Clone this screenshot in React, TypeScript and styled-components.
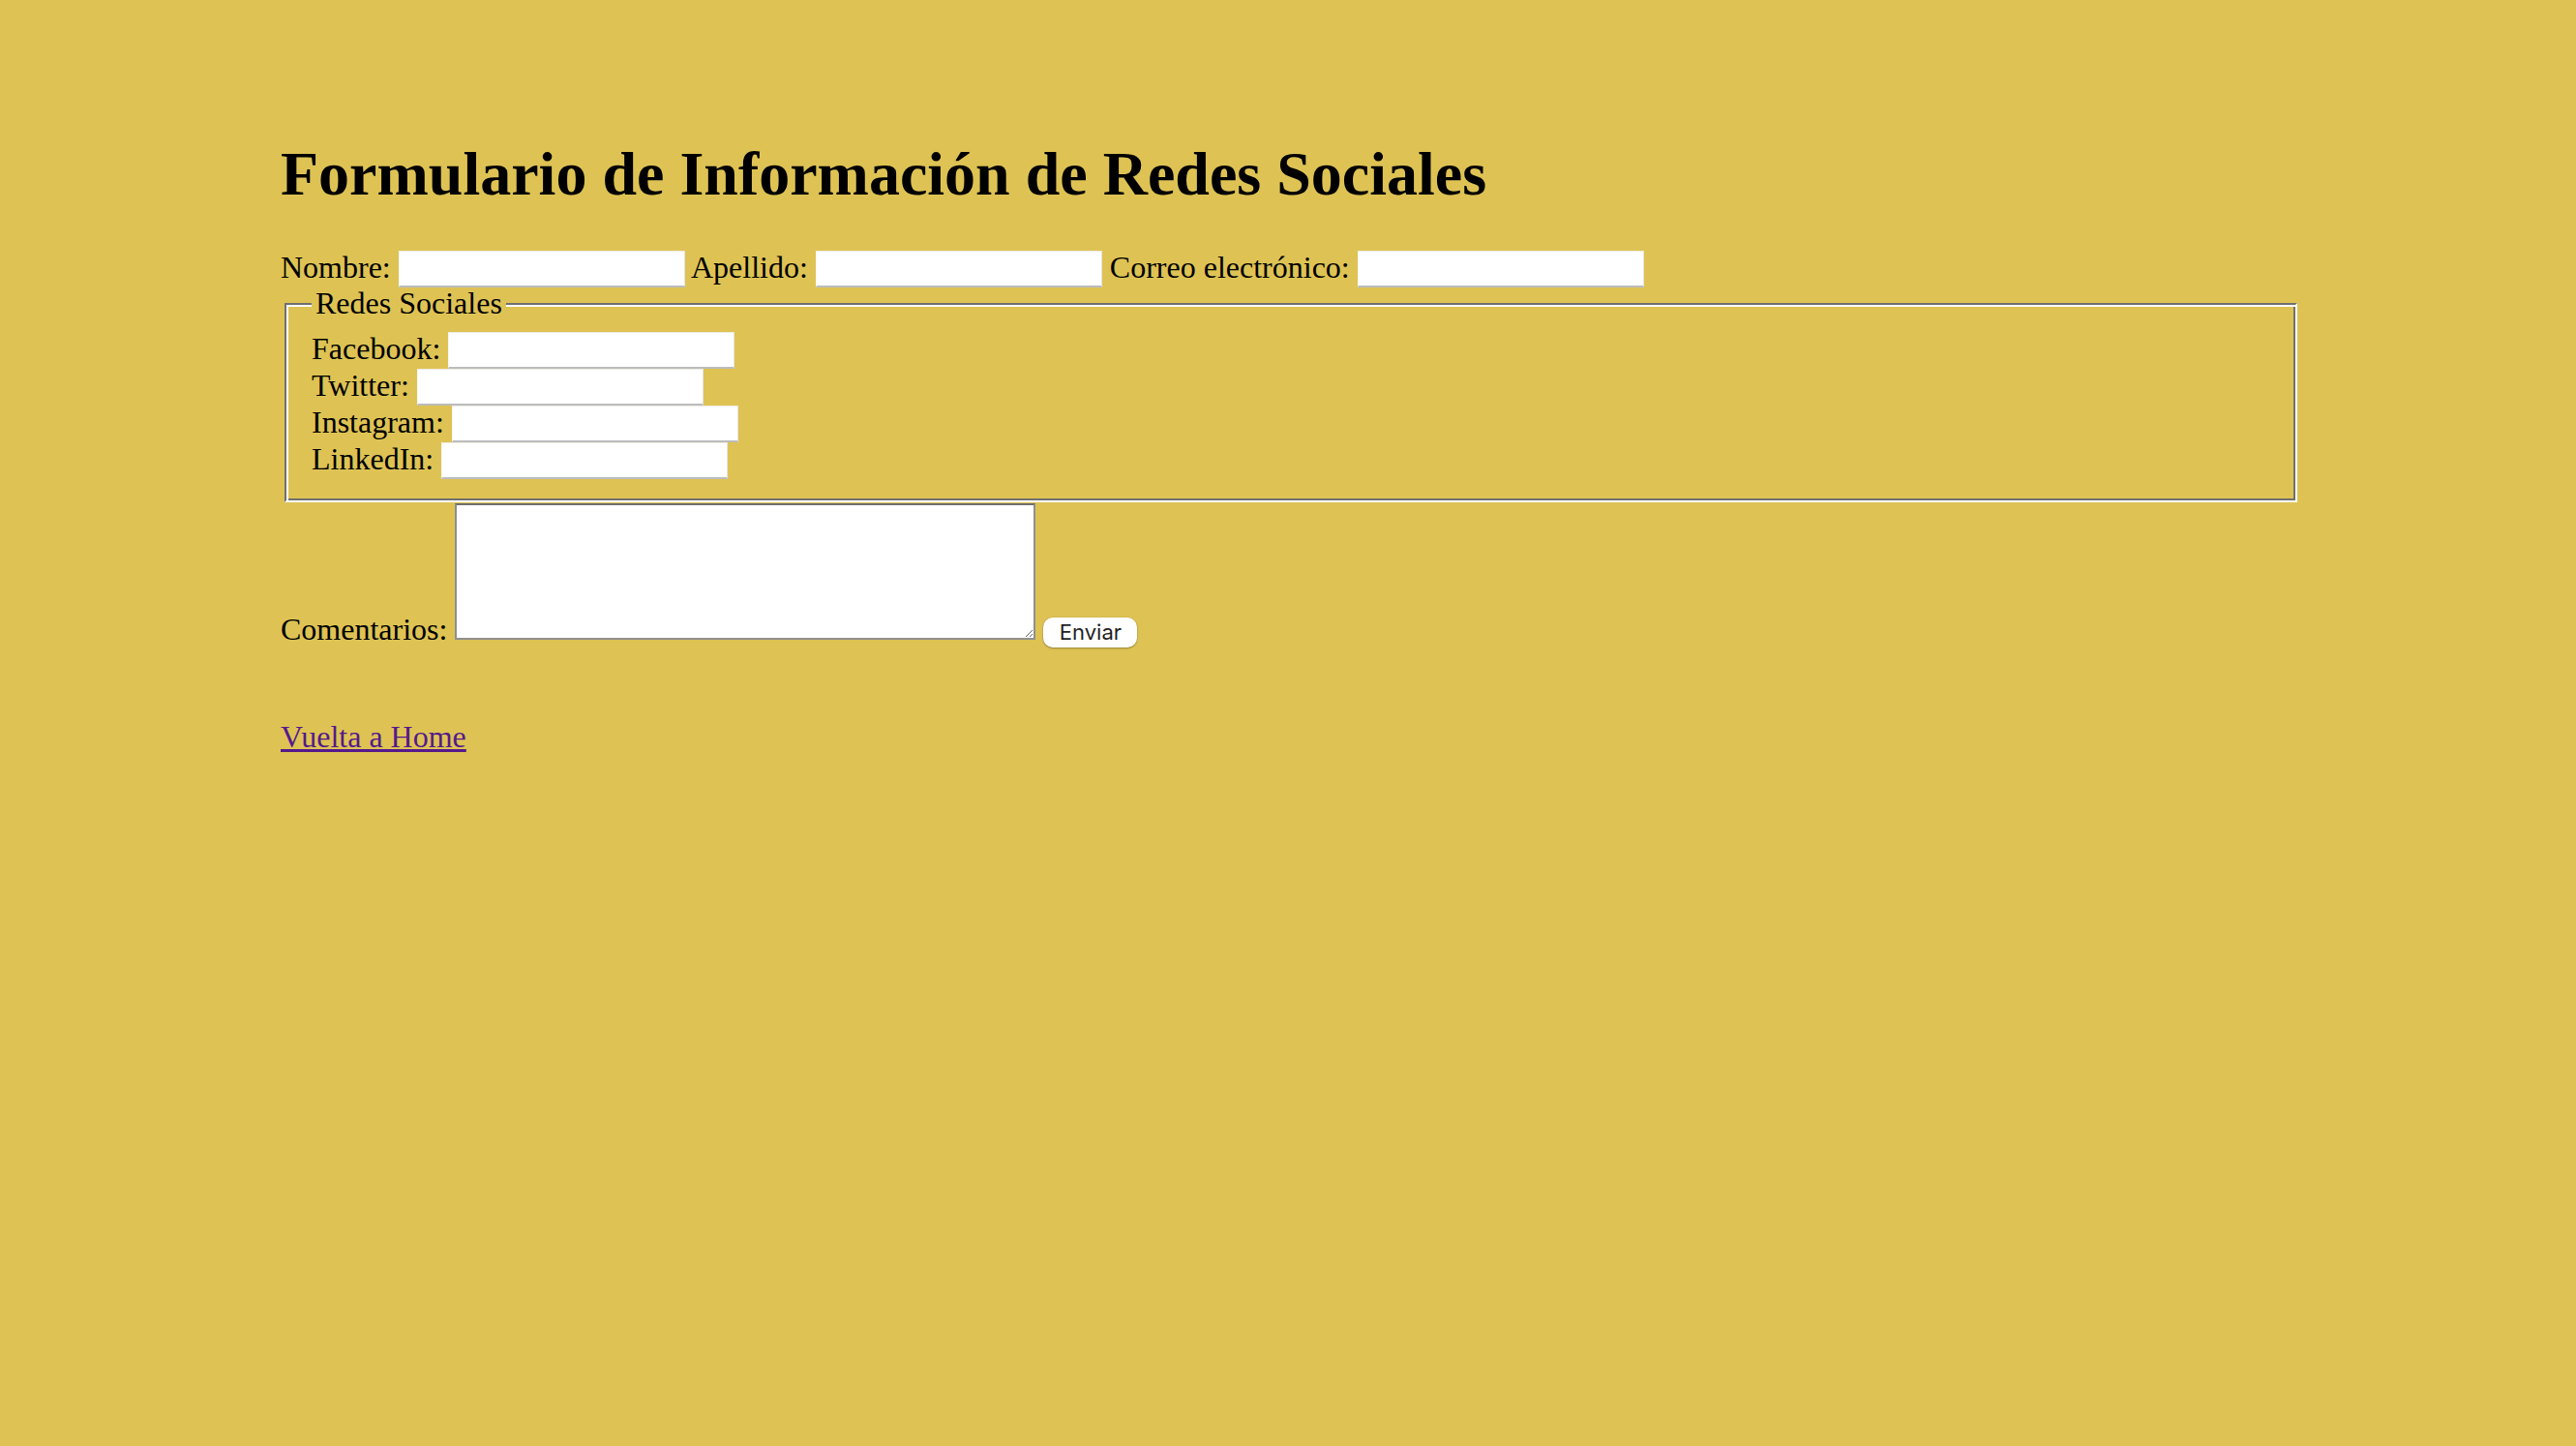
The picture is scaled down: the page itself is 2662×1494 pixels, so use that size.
import React from "react";
import styled, { createGlobalStyle } from "styled-components";

const GlobalStyle = createGlobalStyle`
  html {
    background: #dec354;
  }
  html, body {
    margin: 0;
    padding: 0;
  }
  body {
    font-family: "Liberation Serif", "Times New Roman", serif;
    font-size: 32px;
    color: #000;
  }
`;

const Page = styled.main`
  box-sizing: content-box;
  width: 2088px;
  padding: 100px 0 0 290px;
`;

const Title = styled.h1`
  margin: 43px 0 42px;
  font-size: 64px;
  font-weight: bold;
  line-height: normal;
  white-space: nowrap;
`;

const Form = styled.form`
  margin: 0;
`;

const InputRow = styled.div`
  white-space: nowrap;
  line-height: 35px;
`;

const CommentRow = styled.div`
  white-space: nowrap;
  line-height: normal;
`;

const Field = styled.label`
  font: inherit;
`;

const TextInput = styled.input`
  box-sizing: border-box;
  width: 296px;
  height: 38px;
  margin: 0;
  padding: 0 4px;
  font-family: "Inter", sans-serif;
  font-size: 22px;
  background: #fff;
  border-style: solid;
  border-width: 1px 1px 2px 1px;
  border-color: rgba(120, 100, 20, 0.12) #e4e4e4 #bcbcbc rgba(120, 100, 20, 0.06);
  border-radius: 0;
  vertical-align: top;
  outline: none;
`;

const Fieldset = styled.fieldset`
  margin: -2px 4px 0;
  padding: 11px 26px 22px;
  border-style: solid;
  border-width: 2px;
  border-color: #707070 #ffffff #ffffff #707070;
  box-shadow: inset 2px 2px 0 #ffffff, inset -2px -2px 0 #707070;
  min-inline-size: min-content;
`;

const Legend = styled.legend`
  padding: 0 4px;
  font-size: 32px;
  line-height: normal;
  background: #dec354;
`;

const CommentBox = styled.textarea`
  box-sizing: border-box;
  width: 600px;
  height: 141px;
  margin: 1px 0 0;
  padding: 4px;
  font-family: "Liberation Mono", monospace;
  font-size: 22px;
  background: #fff;
  border: 2px solid #8f8f8f;
  border-top-color: #6f6f6f;
  border-radius: 0;
  vertical-align: baseline;
  outline: none;
`;

const SubmitButton = styled.button`
  box-sizing: border-box;
  width: 97px;
  height: 31px;
  margin: 0;
  padding: 0;
  font-family: "Inter", "Liberation Sans", sans-serif;
  font-size: 22px;
  color: #1f1f1f;
  background: #fff;
  border: none;
  border-radius: 10px;
  box-shadow: 0 1px 2px rgba(0, 0, 0, 0.3), 0 0 0 0.5px rgba(0, 0, 0, 0.08);
  vertical-align: baseline;
  cursor: pointer;
`;

const LinkLine = styled.p`
  margin: 74px 0 0;
`;

const HomeLink = styled.a`
  color: #551a8b;
  text-decoration: underline;
`;

const socials = ["Facebook", "Twitter", "Instagram", "LinkedIn"];

export default function App() {
  return (
    <>
      <GlobalStyle />
      <Page>
        <Title>Formulario de Información de Redes Sociales</Title>
        <Form onSubmit={(e) => e.preventDefault()}>
          <InputRow>
            <Field>
              Nombre: <TextInput type="text" name="nombre" />
            </Field>{" "}
            <Field>
              Apellido: <TextInput type="text" name="apellido" />
            </Field>{" "}
            <Field>
              Correo electrónico: <TextInput type="email" name="correo" />
            </Field>
          </InputRow>
          <Fieldset>
            <Legend>Redes Sociales</Legend>
            {socials.map((s) => (
              <InputRow key={s}>
                <Field>
                  {s}: <TextInput type="text" name={s.toLowerCase()} />
                </Field>
              </InputRow>
            ))}
          </Fieldset>
          <CommentRow>
            <Field>
              Comentarios: <CommentBox name="comentarios" />
            </Field>{" "}
            <SubmitButton type="submit">Enviar</SubmitButton>
          </CommentRow>
        </Form>
        <LinkLine>
          <HomeLink href="#">Vuelta a Home</HomeLink>
        </LinkLine>
      </Page>
    </>
  );
}
